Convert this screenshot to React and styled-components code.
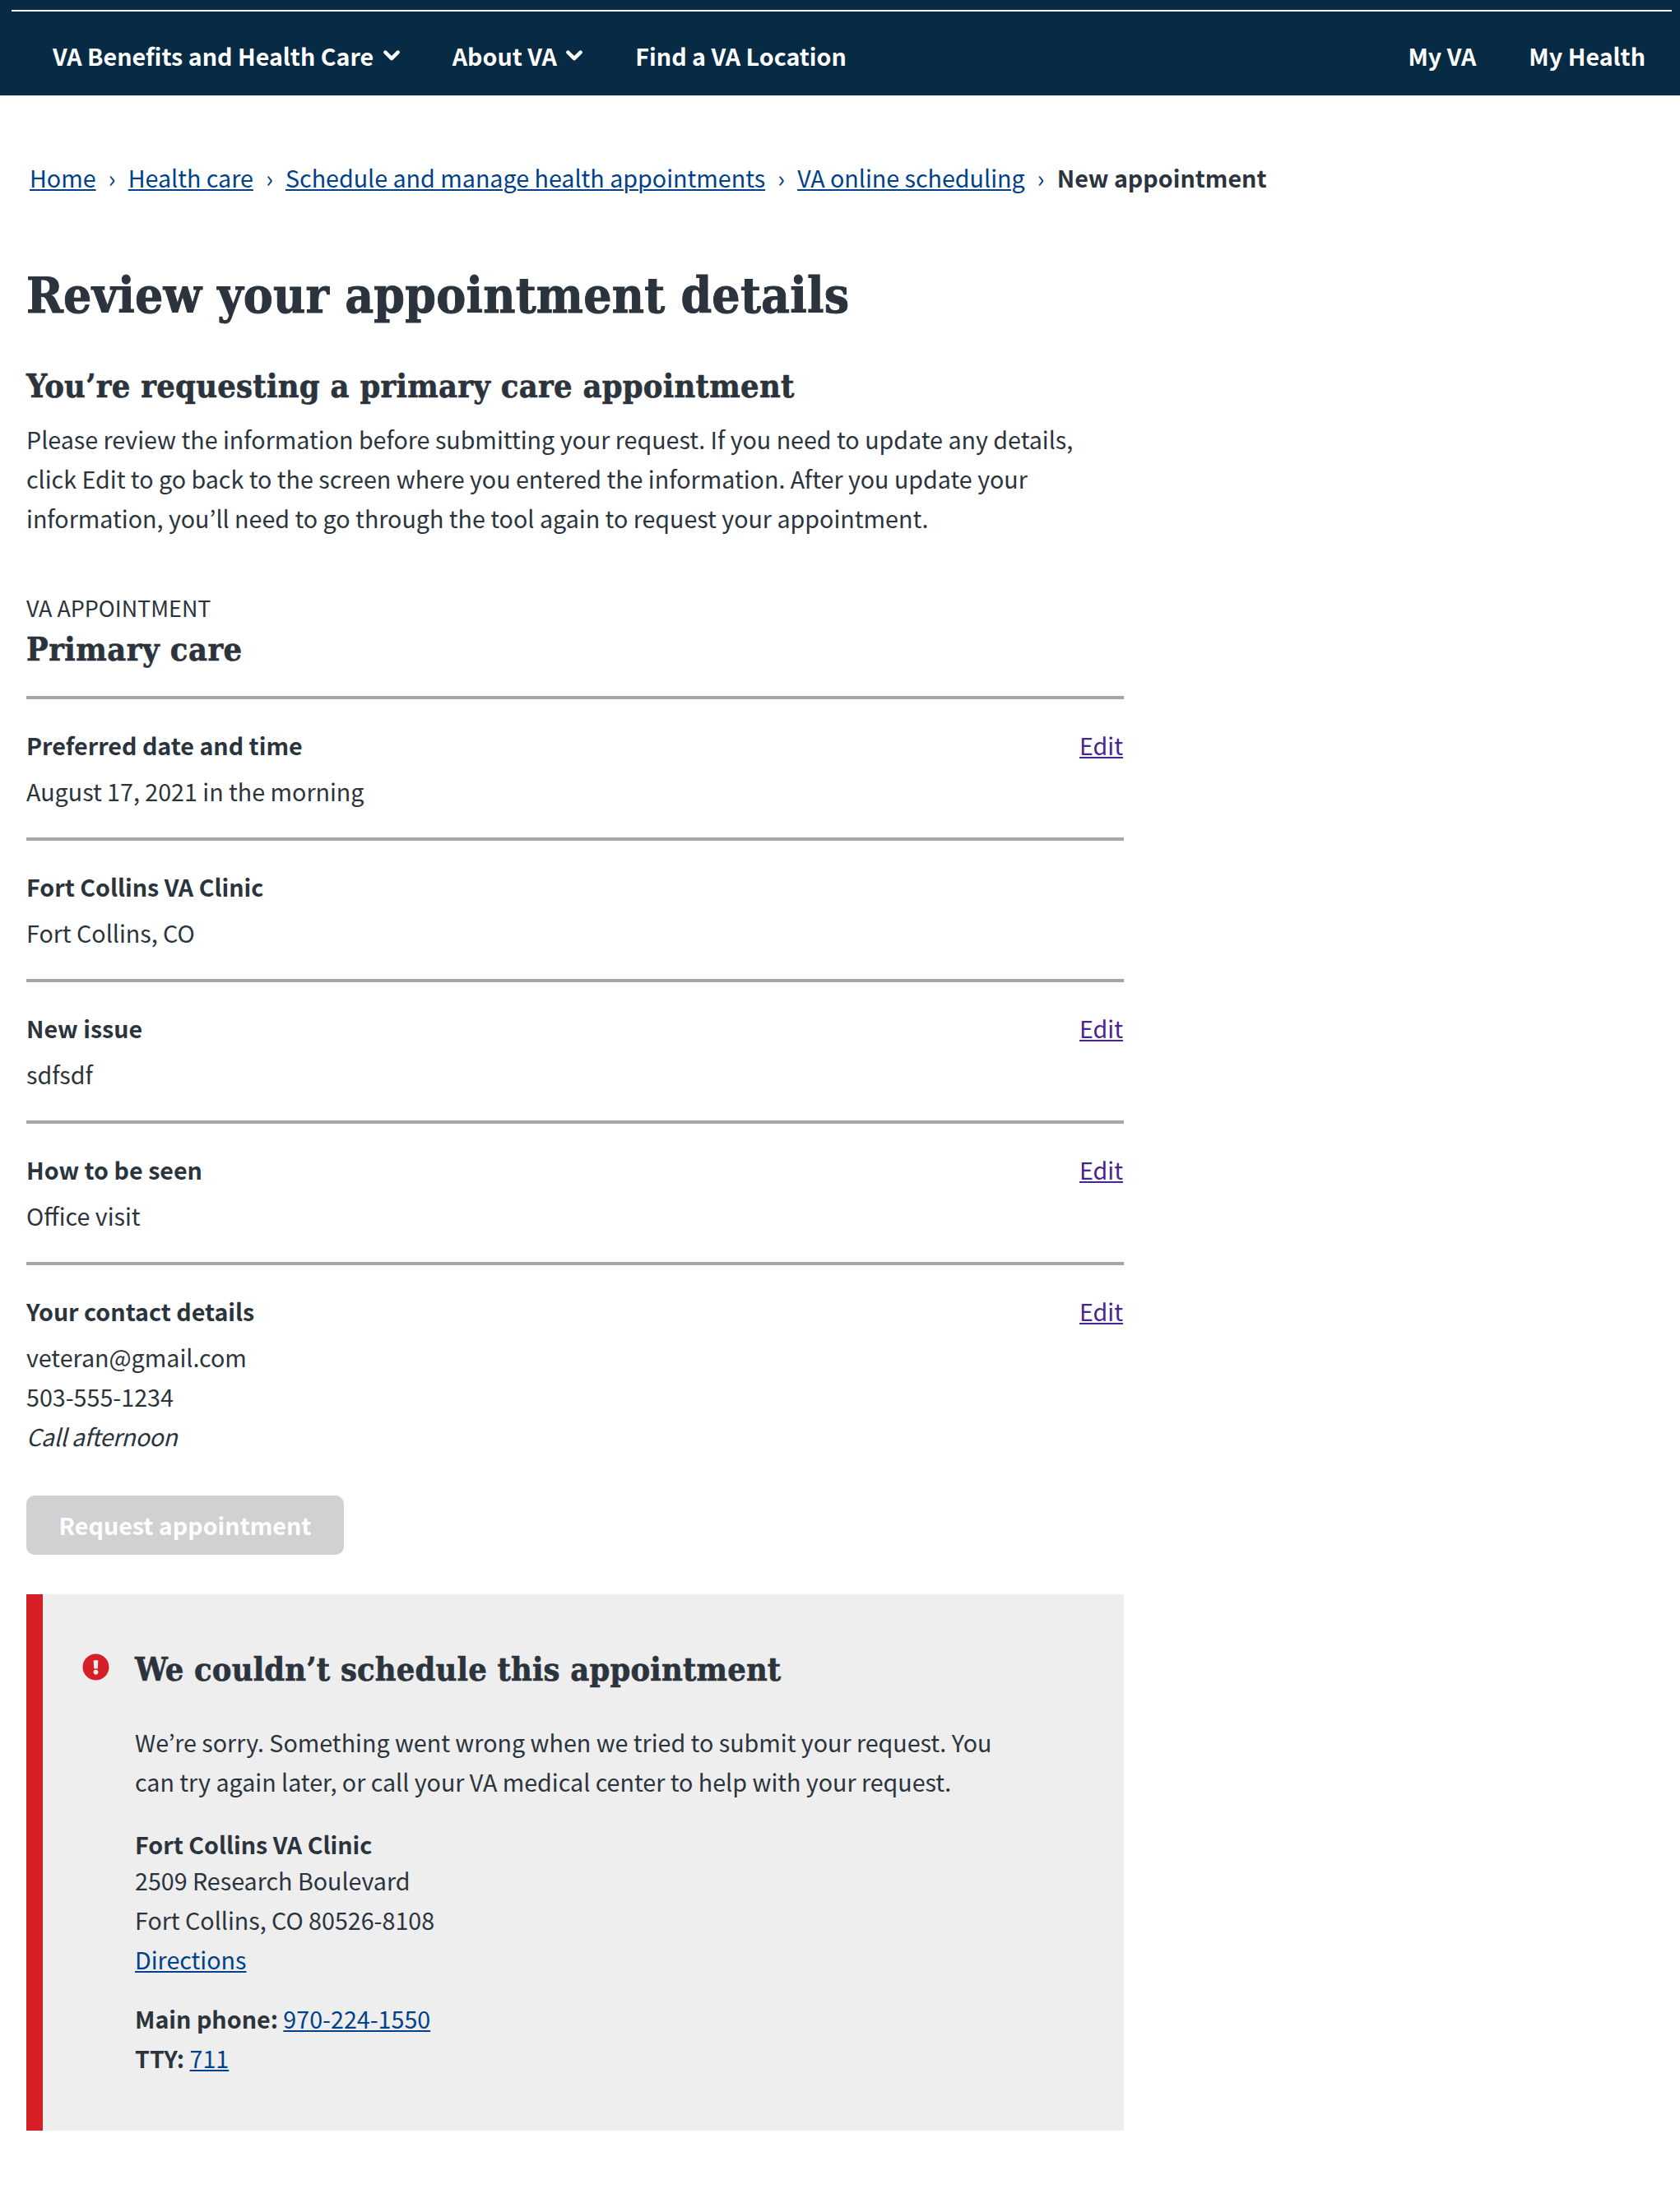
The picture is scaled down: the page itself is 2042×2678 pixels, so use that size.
import React from "react";
import styled, { createGlobalStyle } from "styled-components";
import { FaExclamationCircle } from "react-icons/fa";

const sans = `"Noto Sans CJK KR", "Noto Sans", sans-serif`;
const serif = `"DejaVu Serif Condensed", "DejaVu Serif", serif`;

const GlobalStyle = createGlobalStyle`
  * { box-sizing: border-box; }
  body { margin: 0; background: #fff; color: #2b343d; font: 400 28.65px/48px ${sans}; }
  h1, h2, h3, p { margin: 0; }
`;

const Header = styled.header`
  height: 116px;
  padding: 12px 10px 0 14px;
  background: #072a45;
`;
const NavBar = styled.nav`
  display: flex;
  justify-content: space-between;
  border-top: 2px solid #fff;
  padding: 30px 32px 0 50px;
`;
const NavGroup = styled.div`
  display: flex;
  gap: 64px;
`;
const NavItem = styled.a`
  display: flex;
  align-items: center;
  gap: 11.5px;
  color: #fff;
  font-weight: 700;
`;
const ChevronSvg = styled.svg`
  width: 20px;
  height: 13px;
  margin-top: -1px;
  fill: none;
  stroke: currentColor;
  stroke-width: 4.4;
  stroke-linecap: round;
  stroke-linejoin: round;
`;
const Chevron = () => (
  <ChevronSvg viewBox="0 0 20 13">
    <path d="M2.4 2.6 10 10.1 17.6 2.6" />
  </ChevronSvg>
);

const Breadcrumbs = styled.nav`
  display: flex;
  padding: 76px 36px 0;
`;
const Crumb = styled.span`
  font-weight: ${(p) => (p.$current ? 700 : 400)};
`;
const Separator = styled.span`
  width: 39.1px;
  text-align: center;
  color: #00418a;
`;
const Link = styled.a`
  color: ${(p) => (p.$visited ? "#48258a" : "#00418a")};
  text-decoration: underline;
  text-decoration-thickness: 2px;
  text-underline-offset: 2px;
`;

const Main = styled.main`
  width: 1366px;
  padding-left: 32px;
`;
const PageTitle = styled.h1`
  margin-top: 79px;
  font: 700 60px/80px ${serif};
  letter-spacing: 0.22px;
  -webkit-text-stroke: 0.9px currentColor;
`;
const SubTitle = styled.h2`
  margin-top: ${(p) => p.$top}px;
  font: 700 39.4px/52px ${serif};
  letter-spacing: ${(p) => p.$tracking ?? 0.3}px;
  -webkit-text-stroke: 0.6px currentColor;
`;
const Intro = styled.p`
  margin-top: 15px;
`;
const Line = styled.span`
  display: block;
  white-space: nowrap;
`;
const Italic = styled.em`
  letter-spacing: -0.45px;
`;
const Eyebrow = styled.p`
  margin-top: 65px;
  font-size: 26.9px;
  line-height: 40px;
  text-transform: uppercase;
`;
const Sections = styled.div`
  margin-top: 31px;
`;
const Section = styled.section`
  border-top: 4px solid #a3a7ab;
  padding: 32px 0;
`;
const SectionHead = styled.div`
  display: flex;
  justify-content: space-between;
  padding-right: 1px;
  margin-bottom: 8px;
`;
const Strong = styled.h3`
  font-size: inherit;
  font-weight: 700;
`;
const Submit = styled.button`
  display: block;
  margin-top: 16px;
  width: 386px;
  height: 72px;
  padding: 0;
  border: 0;
  border-radius: 10px;
  background: #d0d1d3;
  color: #fff;
  font: 700 28.65px/48px ${sans};
`;
const Alert = styled.aside`
  display: flex;
  margin-top: 48px;
  height: 652px;
  border-left: 20px solid #d71f28;
  background: #eee;
  padding: 65px 48px 0;
`;
const AlertIcon = styled(FaExclamationCircle)`
  flex: none;
  width: 33px;
  height: 33px;
  margin: 6.5px 31.5px 0 -0.5px;
  color: #d71f28;
`;
const AlertText = styled.p`
  margin-top: ${(p) => p.$top}px;
`;
const Clinic = styled(Strong)`
  margin-top: 32px;
  line-height: 40px;
`;

const sections = [
  { title: "Preferred date and time", lines: ["August 17, 2021 in the morning"], edit: true },
  { title: "Fort Collins VA Clinic", lines: ["Fort Collins, CO"] },
  { title: "New issue", lines: ["sdfsdf"], edit: true },
  { title: "How to be seen", lines: ["Office visit"], edit: true },
  {
    title: "Your contact details",
    lines: ["veteran@gmail.com", "503-555-1234", <Italic key="call">Call afternoon</Italic>],
    edit: true,
  },
];
const trail = ["Home", "Health care", "Schedule and manage health appointments", "VA online scheduling"];

export default function App() {
  return (
    <>
      <GlobalStyle />
      <Header>
        <NavBar>
          <NavGroup>
            <NavItem>VA Benefits and Health Care<Chevron /></NavItem>
            <NavItem>About VA<Chevron /></NavItem>
            <NavItem>Find a VA Location</NavItem>
          </NavGroup>
          <NavGroup>
            <NavItem>My VA</NavItem>
            <NavItem>My Health</NavItem>
          </NavGroup>
        </NavBar>
      </Header>
      <Breadcrumbs>
        {trail.map((name) => (
          <React.Fragment key={name}>
            <Crumb><Link>{name}</Link></Crumb>
            <Separator>›</Separator>
          </React.Fragment>
        ))}
        <Crumb $current>New appointment</Crumb>
      </Breadcrumbs>
      <Main>
        <PageTitle>Review your appointment details</PageTitle>
        <SubTitle $top={44}>You’re requesting a primary care appointment</SubTitle>
        <Intro>
          <Line>Please review the information before submitting your request. If you need to update any details,</Line>
          <Line>click Edit to go back to the screen where you entered the information. After you update your</Line>
          <Line>information, you’ll need to go through the tool again to request your appointment.</Line>
        </Intro>
        <Eyebrow>VA appointment</Eyebrow>
        <SubTitle $top={4} $tracking={0.5}>Primary care</SubTitle>
        <Sections>
          {sections.map((s) => (
            <Section key={s.title}>
              <SectionHead>
                <Strong>{s.title}</Strong>
                {s.edit && <Link $visited>Edit</Link>}
              </SectionHead>
              {s.lines.map((line, i) => (
                <Line key={i}>{line}</Line>
              ))}
            </Section>
          ))}
        </Sections>
        <Submit>Request appointment</Submit>
        <Alert>
          <AlertIcon />
          <div>
            <SubTitle $top={0} $tracking={0.2}>We couldn’t schedule this appointment</SubTitle>
            <AlertText $top={39}>
              <Line>We’re sorry. Something went wrong when we tried to submit your request. You</Line>
              <Line>can try again later, or call your VA medical center to help with your request.</Line>
            </AlertText>
            <Clinic>Fort Collins VA Clinic</Clinic>
            <Line>2509 Research Boulevard</Line>
            <Line>Fort Collins, CO 80526-8108</Line>
            <Line><Link>Directions</Link></Line>
            <AlertText $top={24}>
              <Line><b>Main phone:</b> <Link>970-224-1550</Link></Line>
              <Line><b>TTY:</b> <Link>711</Link></Line>
            </AlertText>
          </div>
        </Alert>
      </Main>
    </>
  );
}
